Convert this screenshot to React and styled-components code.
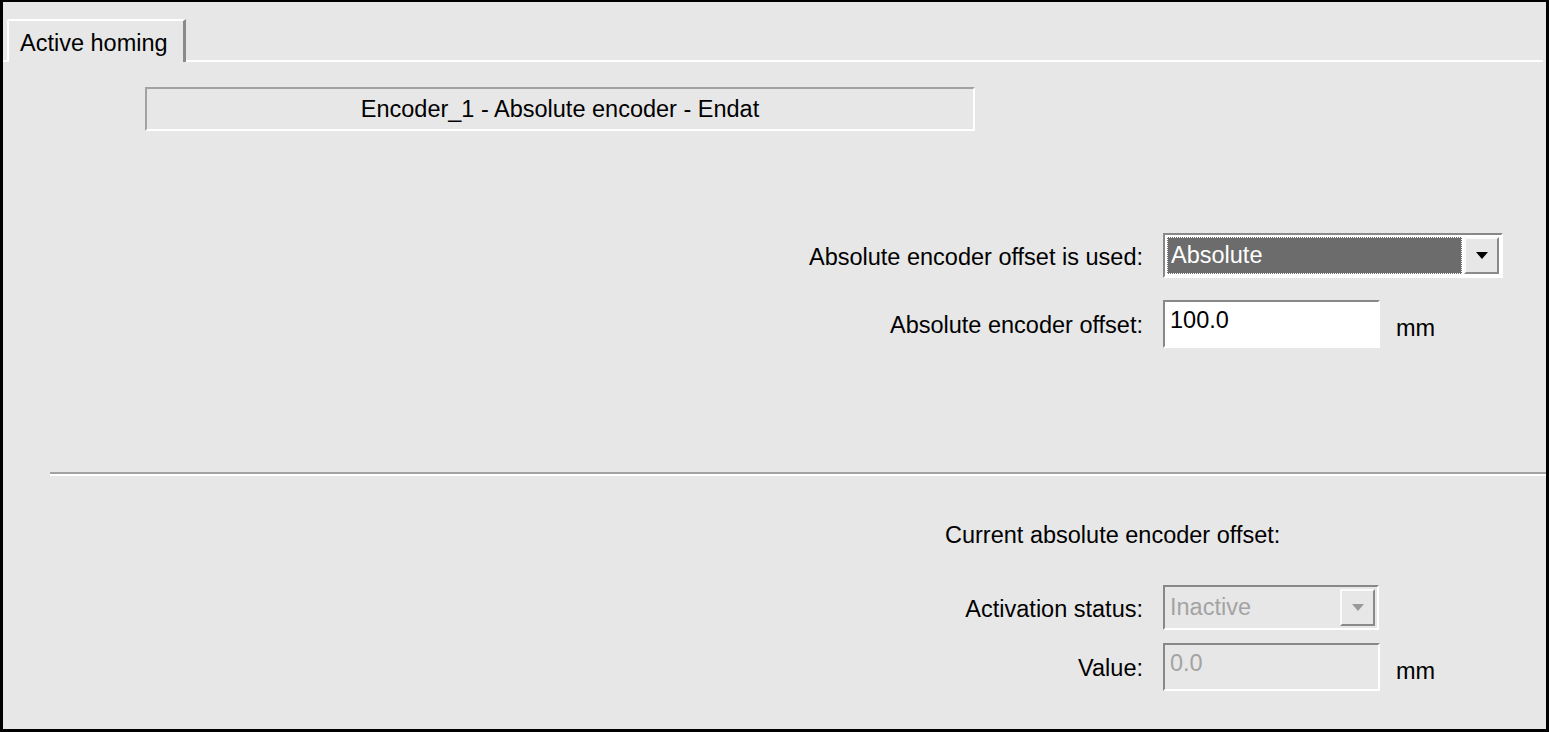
import React from 'react';
import styled, { createGlobalStyle } from 'styled-components';

const GlobalStyle = createGlobalStyle`
  html, body {
    margin: 0;
    padding: 0;
    background: #e7e7e7;
  }
  body {
    font-family: "Liberation Sans", Arial, sans-serif;
  }
`;

const Frame = styled.div`
  box-sizing: border-box;
  width: 1549px;
  height: 732px;
  border: 3px solid #000;
  border-top-width: 2px;
  background: #e7e7e7;
  color: #000;
  font-size: 23.5px;
  display: flex;
  flex-direction: column;
  overflow: hidden;
`;

const TabStrip = styled.div`
  display: flex;
  align-items: flex-end;
  height: 58px;
  padding-left: 4px;
  margin-right: 3px;
  border-bottom: 2px solid #fff;
`;

const Tab = styled.div`
  box-sizing: border-box;
  height: 43px;
  margin-bottom: -2px;
  padding: 4px 15px 0 11px;
  display: flex;
  align-items: center;
  background: #e7e7e7;
  border-top: 2px solid #fff;
  border-left: 2px solid #fff;
  border-right: 3px solid #8a8a8a;
  border-top-left-radius: 2px;
`;

const Panel = styled.div`
  flex: 1;
  display: flex;
  flex-direction: column;
`;

const EncoderBox = styled.div`
  box-sizing: border-box;
  width: 830px;
  height: 44px;
  margin: 25px 0 0 142px;
  display: flex;
  align-items: center;
  justify-content: center;
  border-top: 2px solid #a2a2a2;
  border-left: 2px solid #a2a2a2;
  border-bottom: 2px solid #fff;
  border-right: 2px solid #fff;
`;

const Form = styled.div`
  display: flex;
  flex-direction: column;
  gap: ${p => p.$gap}px;
  margin-top: ${p => p.$top}px;
`;

const Row = styled.div`
  display: flex;
  align-items: center;
`;

const Label = styled.div`
  width: 1140px;
  margin-right: 20px;
  padding-top: 3px;
  text-align: right;
`;

const Combo = styled.div`
  box-sizing: border-box;
  width: ${p => p.$width}px;
  height: 45px;
  display: flex;
  padding: 2px;
  background: ${p => (p.$disabled ? '#e7e7e7' : '#fff')};
  border-top: 2px solid #888;
  border-left: 2px solid #888;
  border-bottom: 2px solid #fff;
  border-right: 2px solid #fff;
`;

const ComboValue = styled.div`
  flex: 1;
  display: flex;
  align-items: center;
  padding-left: 3px;
  margin-right: 2px;
  color: ${p => (p.$disabled ? '#a3a3a3' : '#fff')};
  background: ${p => (p.$disabled ? 'transparent' : '#6c6c6c')};
  outline: ${p => (p.$disabled ? 'none' : '1px dotted #fff')};
  outline-offset: -1px;
  border: ${p => (p.$disabled ? 'none' : '1px dotted #000')};
  line-height: 1;
`;

const ComboButton = styled.div`
  box-sizing: border-box;
  width: 35px;
  display: flex;
  align-items: center;
  justify-content: center;
  background: #e7e7e7;
  border-top: 2px solid #fafafa;
  border-left: 2px solid #fafafa;
  border-bottom: 2px solid #8a8a8a;
  border-right: 2px solid #8a8a8a;
`;

const Arrow = styled.div`
  width: 0;
  height: 0;
  border-left: 6px solid transparent;
  border-right: 6px solid transparent;
  border-top: 7px solid ${p => (p.$disabled ? '#9a9a9a' : '#000')};
`;

const TextBox = styled.div`
  box-sizing: border-box;
  width: 217px;
  height: 48px;
  padding: 5px 0 0 5px;
  background: ${p => (p.$disabled ? '#e7e7e7' : '#fff')};
  color: ${p => (p.$disabled ? '#a3a3a3' : '#000')};
  border-top: 2px solid #888;
  border-left: 2px solid #888;
  border-bottom: 2px solid #fff;
  border-right: 2px solid #fff;
`;

const Unit = styled.span`
  margin: 8px 0 0 16px;
`;

const Separator = styled.div`
  margin: 124px 0 0 47px;
  border-top: 2px solid #a2a2a2;
  border-bottom: 2px solid #fff;
`;

const Heading = styled.div`
  margin: 46px 0 0 942px;
`;

function ComboBox({ value, width, disabled }) {
  return (
    <Combo $width={width} $disabled={disabled}>
      <ComboValue $disabled={disabled}>{value}</ComboValue>
      <ComboButton>
        <Arrow $disabled={disabled} />
      </ComboButton>
    </Combo>
  );
}

export default function App() {
  return (
    <>
      <GlobalStyle />
      <Frame>
        <TabStrip>
          <Tab>Active homing</Tab>
        </TabStrip>
        <Panel>
          <EncoderBox>Encoder_1 - Absolute encoder - Endat</EncoderBox>

          <Form $top={102} $gap={22}>
            <Row>
              <Label>Absolute encoder offset is used:</Label>
              <ComboBox value="Absolute" width={340} />
            </Row>
            <Row>
              <Label>Absolute encoder offset:</Label>
              <TextBox>100.0</TextBox>
              <Unit>mm</Unit>
            </Row>
          </Form>

          <Separator />

          <Heading>Current absolute encoder offset:</Heading>

          <Form $top={36} $gap={13}>
            <Row>
              <Label>Activation status:</Label>
              <ComboBox value="Inactive" width={216} disabled />
            </Row>
            <Row>
              <Label>Value:</Label>
              <TextBox $disabled>0.0</TextBox>
              <Unit>mm</Unit>
            </Row>
          </Form>
        </Panel>
      </Frame>
    </>
  );
}
